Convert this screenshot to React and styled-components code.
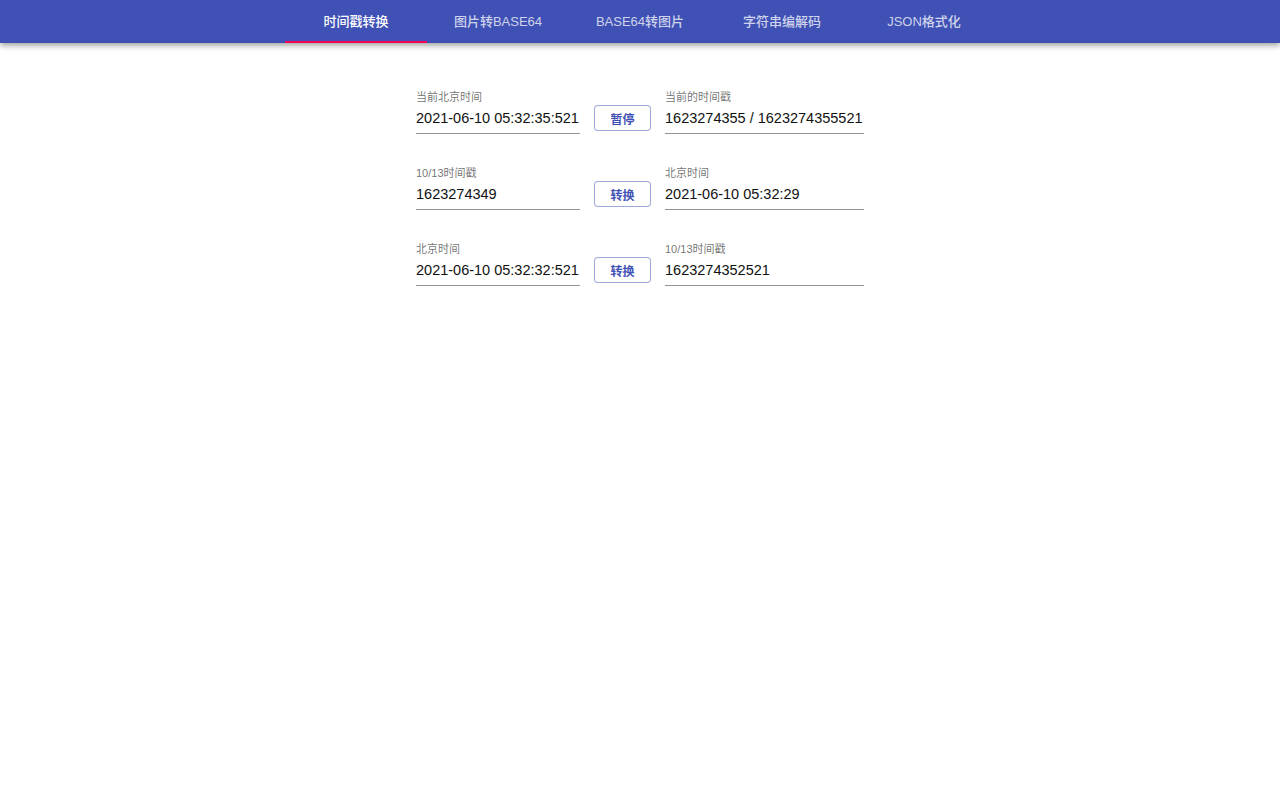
import React, { useState } from 'react'
import styled, { createGlobalStyle } from 'styled-components'

const Global = createGlobalStyle`
  body {
    margin: 0;
    background: #fff;
    font-family: "Liberation Sans", Arial, "Noto Sans CJK SC", sans-serif;
  }
`

const AppBar = styled.header`
  height: 43px;
  background: #3f51b5;
  box-shadow: 0 2px 4px -1px rgba(0,0,0,0.2), 0 4px 5px 0 rgba(0,0,0,0.14), 0 1px 10px 0 rgba(0,0,0,0.12);
  display: flex;
  justify-content: center;
`

const Tab = styled.div`
  width: 142px;
  height: 43px;
  display: flex;
  align-items: center;
  justify-content: center;
  box-sizing: border-box;
  padding-bottom: 1px;
  font-size: 13px;
  font-weight: 500;
  color: ${p => (p.active ? '#fff' : 'rgba(255,255,255,0.75)')};
  border-bottom: 2px solid ${p => (p.active ? '#f50057' : 'transparent')};
  cursor: pointer;
`

const Main = styled.main`
  display: flex;
  flex-direction: column;
  align-items: center;
  padding-top: 47px;
  gap: 32px;
`

const Row = styled.div`
  display: flex;
  align-items: flex-end;
  gap: 14px;
`

const Field = styled.label`
  display: flex;
  flex-direction: column;
  width: ${p => p.w}px;
`

const Label = styled.span`
  font-size: 11px;
  line-height: 14px;
  color: rgba(0,0,0,0.58);
`

const Input = styled.input`
  margin: 0;
  border: none;
  border-bottom: 1px solid rgba(0,0,0,0.42);
  outline: none;
  padding: 5px 0 6px;
  font-family: "Liberation Sans", Arial, sans-serif;
  font-size: 14.5px;
  line-height: 18px;
  color: #111;
  background: transparent;
`

const Button = styled.button`
  width: 57px;
  height: 26px;
  margin-bottom: 3px;
  border: 1px solid rgba(63,81,181,0.5);
  border-radius: 4px;
  background: #fff;
  color: #3f51b5;
  font-family: "Liberation Sans", "Noto Sans CJK SC", sans-serif;
  font-size: 12px;
  font-weight: 700;
  cursor: pointer;
`

const tabs = ['时间戳转换', '图片转BASE64', 'BASE64转图片', '字符串编解码', 'JSON格式化']

const rows = [
  { l: '当前北京时间', lv: '2021-06-10 05:32:35:521', b: '暂停', r: '当前的时间戳', rv: '1623274355 / 1623274355521' },
  { l: '10/13时间戳', lv: '1623274349', b: '转换', r: '北京时间', rv: '2021-06-10 05:32:29' },
  { l: '北京时间', lv: '2021-06-10 05:32:32:521', b: '转换', r: '10/13时间戳', rv: '1623274352521' },
]

export default function App() {
  const [active, setActive] = useState(0)
  return (
    <>
      <Global />
      <AppBar>
        {tabs.map((t, i) => (
          <Tab key={t} active={i === active} onClick={() => setActive(i)}>{t}</Tab>
        ))}
      </AppBar>
      <Main>
        {rows.map((r, i) => (
          <Row key={i}>
            <Field w={164}>
              <Label>{r.l}</Label>
              <Input defaultValue={r.lv} />
            </Field>
            <Button>{r.b}</Button>
            <Field w={199}>
              <Label>{r.r}</Label>
              <Input defaultValue={r.rv} />
            </Field>
          </Row>
        ))}
      </Main>
    </>
  )
}
